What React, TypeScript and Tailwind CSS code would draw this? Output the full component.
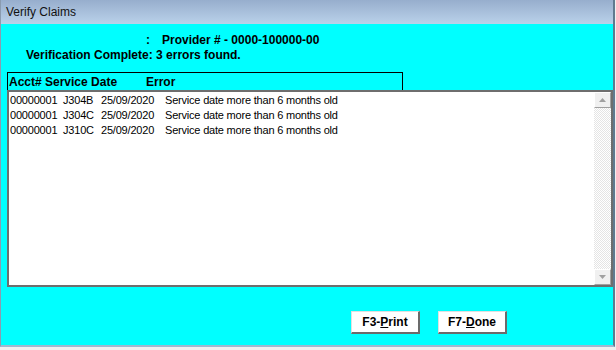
const rows = [
  { acct: '00000001', code: 'J304B', date: '25/09/2020', err: 'Service date more than 6 months old' },
  { acct: '00000001', code: 'J304C', date: '25/09/2020', err: 'Service date more than 6 months old' },
  { acct: '00000001', code: 'J310C', date: '25/09/2020', err: 'Service date more than 6 months old' },
];

export default function App() {
  return (
    <div className="w-[616px] h-[350px] bg-[#f0f0f0] font-['Liberation_Sans',Arial,sans-serif] text-black">
      <div className="w-[615px] h-[347px] flex flex-col border-l border-r-2 border-b-2 border-l-[#8a9bb0] border-r-[#5f7a8f] border-b-[#9fb8d0]">
        {/* title bar */}
        <div className="h-[24px] shrink-0 bg-gradient-to-b from-[#97aecd] to-[#bad2ea] flex items-center pl-[5px]">
          <span className="text-[12px] text-[#111]">Verify Claims</span>
        </div>

        {/* body */}
        <div className="flex-1 bg-[#00ffff] flex flex-col">
          <div className="pl-[145px] pt-[9px] text-[12px] font-bold leading-[15px] flex">
            <span>:</span>
            <span className="ml-[12px]">Provider # - 0000-100000-00</span>
          </div>
          <div className="pl-[25px] text-[12px] font-bold leading-[15px]">
            Verification Complete: 3 errors found.
          </div>

          {/* column header */}
          <div className="ml-[6px] mt-[9px] w-[396px] h-[18px] border-t border-l border-r border-black flex items-center pl-[1px] text-[12px] font-bold">
            <span className="w-[137px]">Acct# Service Date</span>
            <span>Error</span>
          </div>

          {/* list */}
          <div className="ml-[6px] w-[606px] h-[197px] bg-white border-2 border-[#6e6e6e] flex">
            <div className="flex-1 pt-[1px] pl-[1px] text-[11px] leading-[15px] tracking-[-0.2px]">
              {rows.map((r, i) => (
                <div key={i} className="flex">
                  <span className="w-[53px]">{r.acct}</span>
                  <span className="w-[38px]">{r.code}</span>
                  <span className="w-[64px]">{r.date}</span>
                  <span>{r.err}</span>
                </div>
              ))}
            </div>
            <div className="w-[17px] flex flex-col bg-[image:repeating-conic-gradient(#ffffff_0%_25%,#e4e4e4_0%_50%)] bg-[length:2px_2px]">
              <div className="h-[16px] bg-[#f0f0f0] border-t border-l border-white border-b border-r border-b-[#a0a0a0] border-r-[#a0a0a0] flex items-center justify-center">
                <svg width="7" height="4" viewBox="0 0 7 4"><path d="M3.5 0L7 4H0z" fill="#a0a0a0" /></svg>
              </div>
              <div className="flex-1" />
              <div className="h-[16px] bg-[#f0f0f0] border-t border-l border-white border-b border-r border-b-[#a0a0a0] border-r-[#a0a0a0] flex items-center justify-center">
                <svg width="7" height="4" viewBox="0 0 7 4"><path d="M0 0H7L3.5 4z" fill="#a0a0a0" /></svg>
              </div>
            </div>
          </div>

          {/* buttons */}
          <div className="flex gap-[18px] pl-[350px] mt-[24px]">
            <Btn k="F3-" u="P" rest="rint" />
            <Btn k="F7-" u="D" rest="one" />
          </div>
        </div>
      </div>
    </div>
  );
}

function Btn({ k, u, rest }: { k: string; u: string; rest: string }) {
  return (
    <div className="w-[69px] h-[23px] bg-white border-t border-l border-[#e0e0e0] border-b-2 border-r-2 border-b-[#6b6b6b] border-r-[#6b6b6b] flex items-center justify-center text-[12px] font-bold">
      <span>
        {k}
        <span className="underline">{u}</span>
        {rest}
      </span>
    </div>
  );
}
